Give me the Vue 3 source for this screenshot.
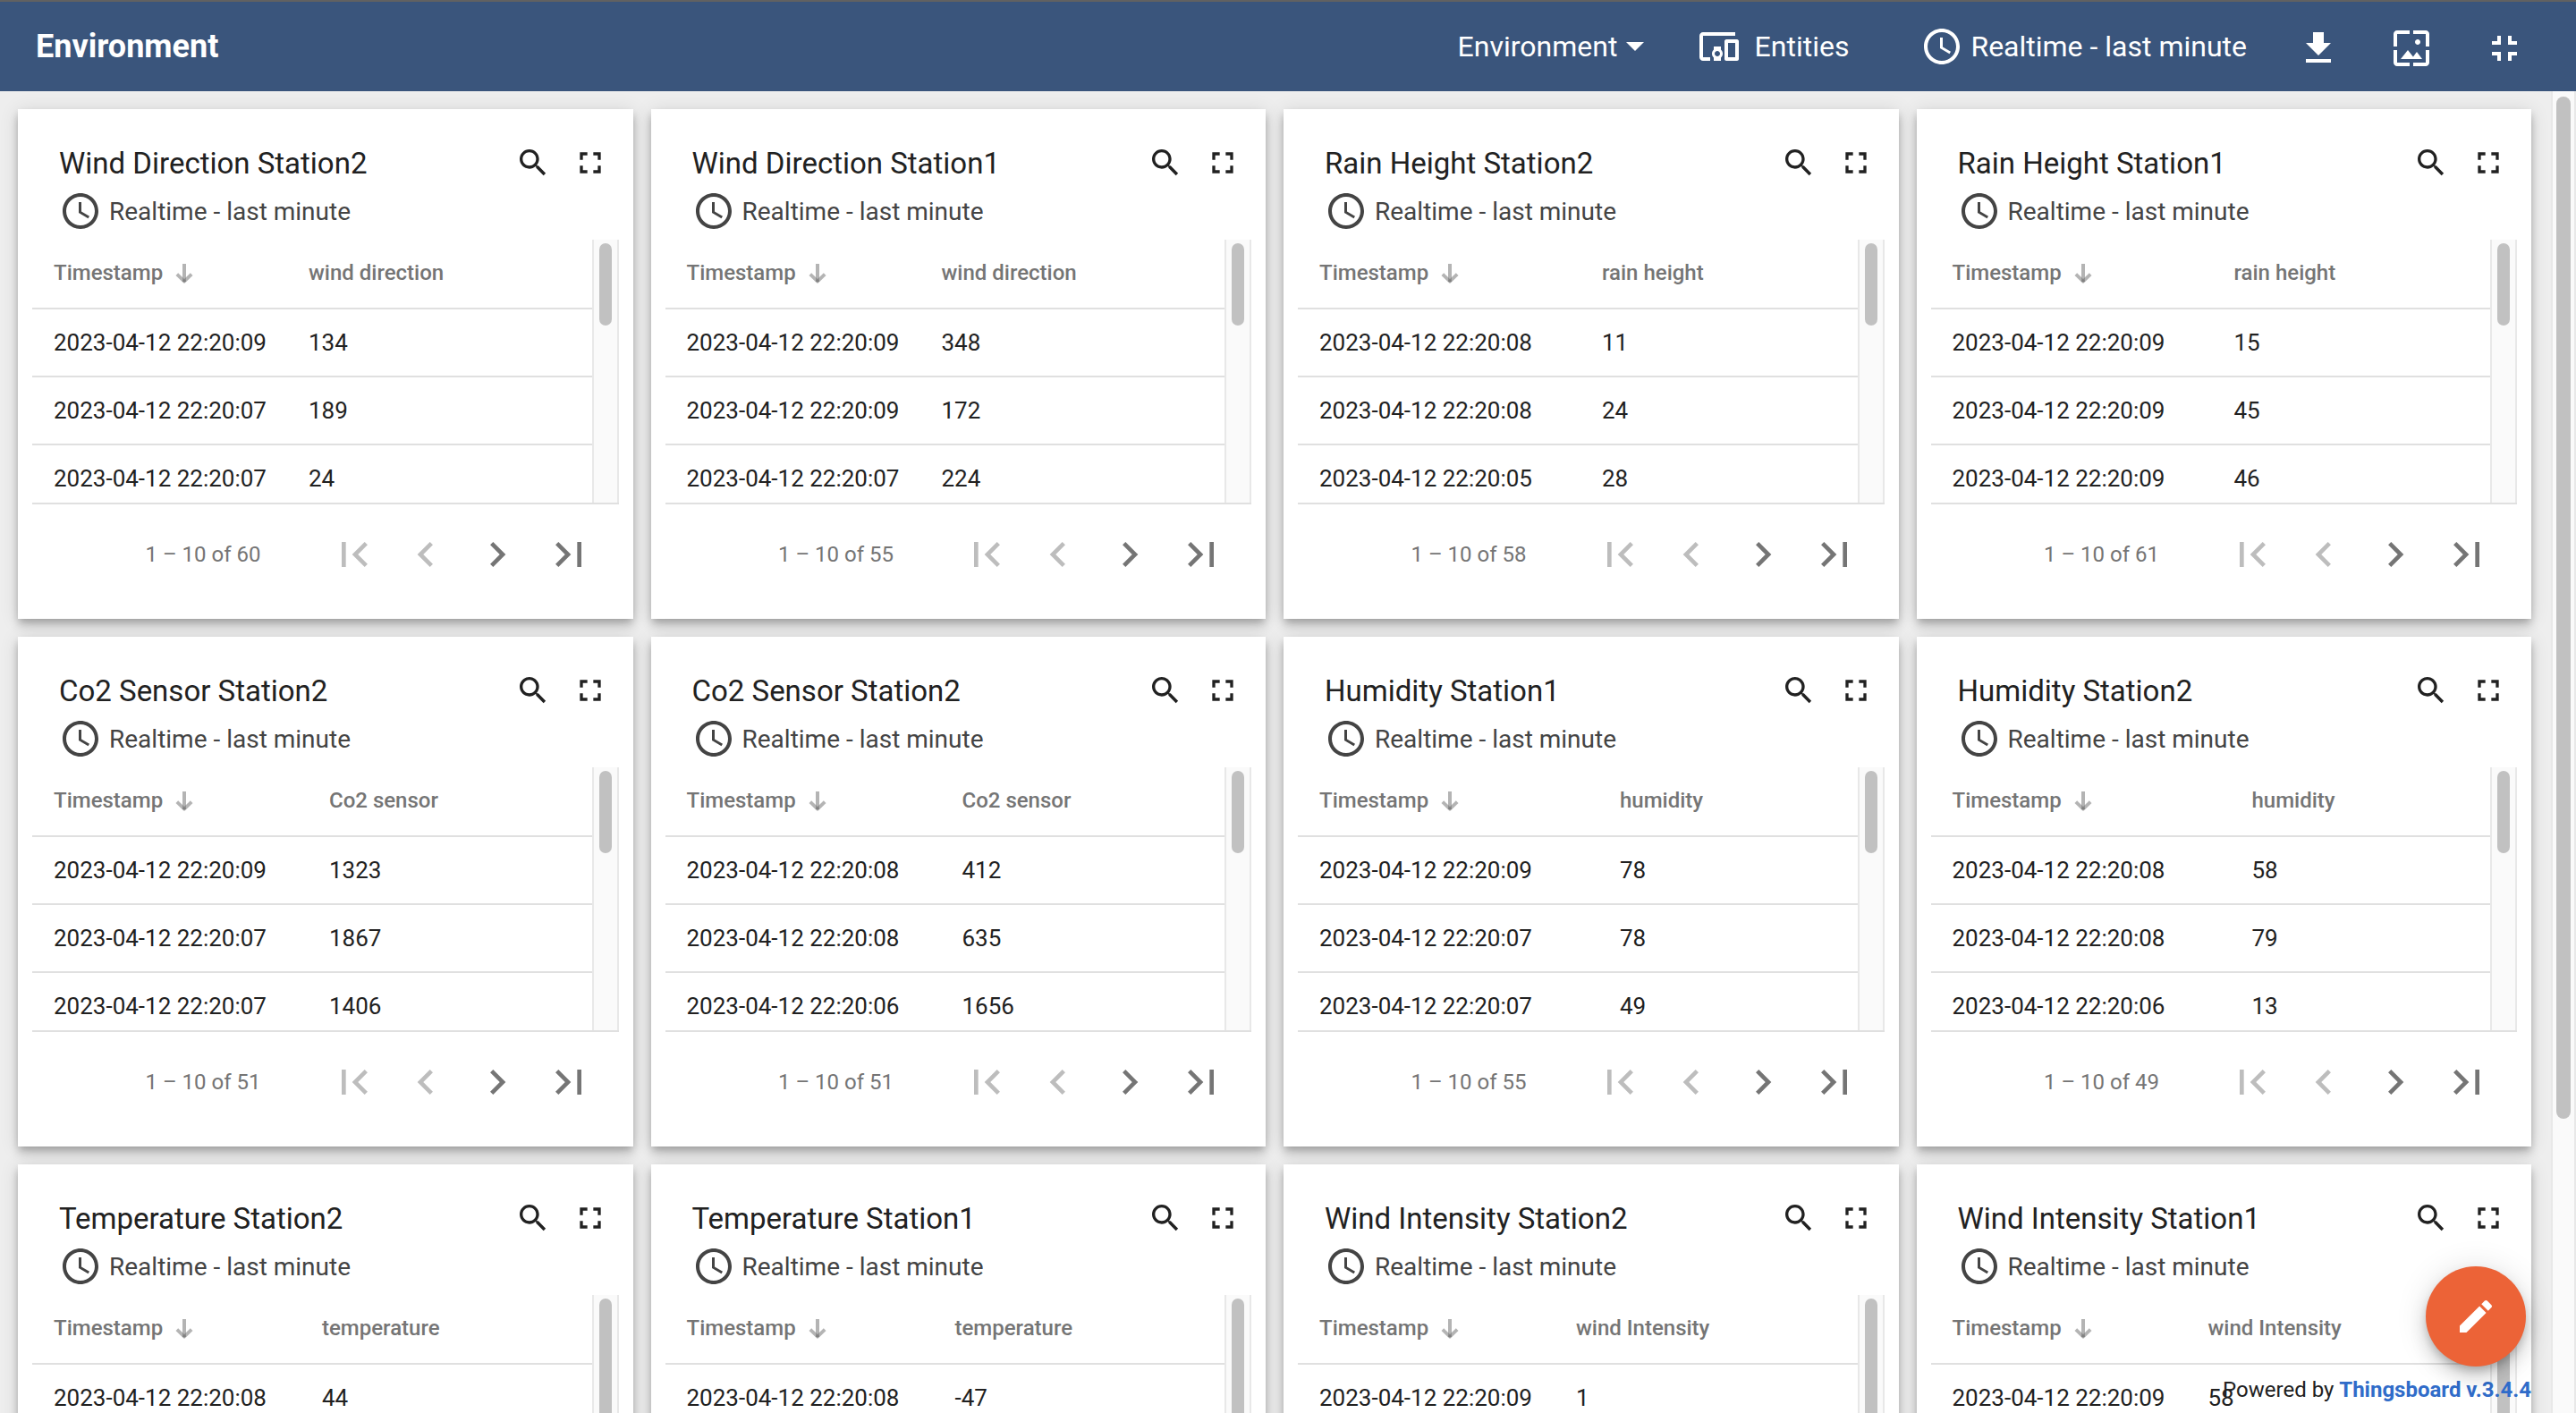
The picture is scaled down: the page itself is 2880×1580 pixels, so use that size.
<script setup>
import { ref } from 'vue'

const dashboard = ref('Environment')

const icons = {
  clock: 'M11.99 2C6.47 2 2 6.48 2 12s4.47 10 9.99 10C17.52 22 22 17.52 22 12S17.52 2 11.99 2zM12 20c-4.42 0-8-3.58-8-8s3.58-8 8-8 8 3.58 8 8-3.58 8-8 8zm.5-13H11v6l5.25 3.15.75-1.23-4.5-2.67z',
  devices: 'M3 6h18V4H3c-1.1 0-2 .9-2 2v12c0 1.1.9 2 2 2h4v-2H3V6zm10 6H9v1.78c-.61.55-1 1.33-1 2.22s.39 1.67 1 2.22V20h4v-1.78c.61-.55 1-1.34 1-2.22s-.39-1.67-1-2.22V12zm-2 5.5c-.83 0-1.5-.67-1.5-1.5s.67-1.5 1.5-1.5 1.5.67 1.5 1.5-.67 1.5-1.5 1.5zM22 8h-6c-.5 0-1 .5-1 1v10c0 .5.5 1 1 1h6c.5 0 1-.5 1-1V9c0-.5-.5-1-1-1zm-1 10h-4v-8h4v8z',
  download: 'M19 9h-4V3H9v6H5l7 7 7-7zM5 18v2h14v-2H5z',
  wallpaper: 'M4 4h7V2H4c-1.1 0-2 .9-2 2v7h2V4zm6 9l-4 5h12l-3-4-2.03 2.71L10 13zm7-4.5c0-.83-.67-1.5-1.5-1.5S14 7.67 14 8.5s.67 1.5 1.5 1.5S17 9.33 17 8.5zM20 2h-7v2h7v7h2V4c0-1.1-.9-2-2-2zm0 18h-7v2h7c1.1 0 2-.9 2-2v-7h-2v7zM4 13H2v7c0 1.1.9 2 2 2h7v-2H4v-7z',
  exitFullscreen: 'M5 16h3v3h2v-5H5v2zm3-8H5v2h5V5H8v3zm6 11h2v-3h3v-2h-5v5zm2-11V5h-2v5h5V8h-3z',
  fullscreen: 'M7 14H5v5h5v-2H7v-3zm-2-4h2V7h3V5H5v5zm12 7h-3v2h5v-5h-2v3zM14 5v2h3v3h2V5h-5z',
  search: 'M15.5 14h-.79l-.28-.27C15.41 12.59 16 11.11 16 9.5 16 5.91 13.09 3 9.5 3S3 5.91 3 9.5 5.91 16 9.5 16c1.61 0 3.09-.59 4.23-1.57l.27.28v.79l5 4.99L20.49 19l-4.99-5zm-6 0C7.01 14 5 11.99 5 9.5S7.01 5 9.5 5 14 7.01 14 9.5 11.99 14 9.5 14z',
  edit: 'M3 17.25V21h3.75L17.81 9.94l-3.75-3.75L3 17.25zM20.71 7.04c.39-.39.39-1.02 0-1.41l-2.34-2.34c-.39-.39-1.02-.39-1.41 0l-1.83 1.83 3.75 3.75 1.83-1.83z',
}

const tools = [
  { label: 'Export dashboard', icon: icons.download },
  { label: 'Update dashboard image', icon: icons.wallpaper },
  { label: 'Exit fullscreen', icon: icons.exitFullscreen },
]

const pagerButtons = [
  { label: 'First page', disabled: true, icon: 'M18.41 16.59L13.82 12l4.59-4.59L17 6l-6 6 6 6zM6 6h2v12H6z' },
  { label: 'Previous page', disabled: true, icon: 'M15.41 7.41L14 6l-6 6 6 6 1.41-1.41L10.83 12z' },
  { label: 'Next page', disabled: false, icon: 'M10 6L8.59 7.41 13.17 12l-4.58 4.59L10 18l6-6z' },
  { label: 'Last page', disabled: false, icon: 'M5.59 7.41L10.18 12l-4.59 4.59L7 18l6-6-6-6zM16 6h2v12h-2z' },
]

const day = '2023-04-12 '

const widgets = [
  { title: 'Wind Direction Station2', column: 'wind direction', timeWidth: 309, thumb: 92, total: 60, rows: [['22:20:09', 134], ['22:20:07', 189], ['22:20:07', 24]] },
  { title: 'Wind Direction Station1', column: 'wind direction', timeWidth: 309, thumb: 92, total: 55, rows: [['22:20:09', 348], ['22:20:09', 172], ['22:20:07', 224]] },
  { title: 'Rain Height Station2', column: 'rain height', timeWidth: 340, thumb: 92, total: 58, rows: [['22:20:08', 11], ['22:20:08', 24], ['22:20:05', 28]] },
  { title: 'Rain Height Station1', column: 'rain height', timeWidth: 339, thumb: 92, total: 61, rows: [['22:20:09', 15], ['22:20:09', 45], ['22:20:09', 46]] },
  { title: 'Co2 Sensor Station2', column: 'Co2 sensor', timeWidth: 332, thumb: 92, total: 51, rows: [['22:20:09', 1323], ['22:20:07', 1867], ['22:20:07', 1406]] },
  { title: 'Co2 Sensor Station2', column: 'Co2 sensor', timeWidth: 332, thumb: 92, total: 51, rows: [['22:20:08', 412], ['22:20:08', 635], ['22:20:06', 1656]] },
  { title: 'Humidity Station1', column: 'humidity', timeWidth: 360, thumb: 92, total: 55, rows: [['22:20:09', 78], ['22:20:07', 78], ['22:20:07', 49]] },
  { title: 'Humidity Station2', column: 'humidity', timeWidth: 359, thumb: 92, total: 49, rows: [['22:20:08', 58], ['22:20:08', 79], ['22:20:06', 13]] },
  { title: 'Temperature Station2', column: 'temperature', timeWidth: 324, thumb: 180, rows: [['22:20:08', 44]] },
  { title: 'Temperature Station1', column: 'temperature', timeWidth: 324, thumb: 180, rows: [['22:20:08', -47]] },
  { title: 'Wind Intensity Station2', column: 'wind Intensity', timeWidth: 311, thumb: 180, rows: [['22:20:09', 1]] },
  { title: 'Wind Intensity Station1', column: 'wind Intensity', timeWidth: 310, thumb: 180, rows: [['22:20:09', 58]] },
]
</script>

<template>
  <div class="page">
    <header class="toolbar">
      <h1 class="toolbar-title">Environment</h1>
      <label class="state">
        <select v-model="dashboard" class="state-select" aria-label="Dashboard">
          <option>Environment</option>
        </select>
        <svg class="caret" viewBox="0 0 20 10" aria-hidden="true"><path d="M0 0h20L10 10z" /></svg>
      </label>
      <button type="button" class="text-button entities">
        <svg class="icon" viewBox="0 0 24 24" aria-hidden="true"><path :d="icons.devices" /></svg>
        Entities
      </button>
      <button type="button" class="text-button window">
        <svg class="icon" viewBox="0 0 24 24" aria-hidden="true"><path :d="icons.clock" /></svg>
        Realtime - last minute
      </button>
      <div class="tools">
        <button v-for="tool in tools" :key="tool.label" type="button" class="tool" :aria-label="tool.label">
          <svg class="icon" viewBox="0 0 24 24" aria-hidden="true"><path :d="tool.icon" /></svg>
        </button>
      </div>
    </header>

    <div class="body">
      <main class="grid">
        <section v-for="(widget, index) in widgets" :key="index" class="card">
          <div class="card-head">
            <h2 class="card-title">{{ widget.title }}</h2>
            <button type="button" class="card-action" aria-label="Search">
              <svg viewBox="0 0 24 24" aria-hidden="true"><path :d="icons.search" /></svg>
            </button>
            <button type="button" class="card-action" aria-label="Fullscreen">
              <svg viewBox="0 0 24 24" aria-hidden="true"><path :d="icons.fullscreen" /></svg>
            </button>
          </div>
          <button type="button" class="card-window">
            <svg class="icon" viewBox="0 0 24 24" aria-hidden="true"><path :d="icons.clock" /></svg>
            Realtime - last minute
          </button>
          <div class="table-area">
            <div class="table-view">
              <table>
                <colgroup>
                  <col :style="{ width: widget.timeWidth + 'px' }" />
                  <col />
                </colgroup>
                <thead>
                  <tr>
                    <th scope="col" class="time">
                      <span class="sort">
                        Timestamp
                        <svg class="sort-arrow" viewBox="0 0 24 24" aria-hidden="true">
                          <path class="sort-line" d="M10 2h4v20h-4z" />
                          <path class="sort-line" d="M2.5 15l2.7-2.7L14 21l-2.5 2.7z" />
                          <path class="sort-line" d="M21.5 15l-2.7-2.7L10 21l2.5 2.7z" />
                        </svg>
                      </span>
                    </th>
                    <th scope="col">{{ widget.column }}</th>
                  </tr>
                </thead>
                <tbody>
                  <tr v-for="(row, i) in widget.rows" :key="i">
                    <td class="time">{{ day + row[0] }}</td>
                    <td>{{ row[1] }}</td>
                  </tr>
                </tbody>
              </table>
            </div>
            <div class="track"><div class="thumb" :style="{ height: widget.thumb + 'px' }"></div></div>
          </div>
          <div class="pager">
            <span v-if="widget.total" class="range">1 – 10 of {{ widget.total }}</span>
            <button
              v-for="button in pagerButtons"
              :key="button.label"
              type="button"
              class="pager-button"
              :disabled="button.disabled"
              :aria-label="button.label"
            >
              <svg viewBox="0 0 24 24" aria-hidden="true"><path :d="button.icon" /></svg>
            </button>
          </div>
        </section>
      </main>
      <div class="track page-track"><div class="thumb page-thumb"></div></div>
    </div>

    <footer class="powered">Powered by <a href="#">Thingsboard v.3.4.4</a></footer>
    <button type="button" class="fab" aria-label="Edit dashboard">
      <svg class="icon" viewBox="0 0 24 24" aria-hidden="true"><path :d="icons.edit" /></svg>
    </button>
  </div>
</template>

<style>
body {
  margin: 0;
}
</style>

<style scoped>
.page {
  position: relative;
  display: flex;
  flex-direction: column;
  height: 100vh;
  overflow: hidden;
  background: #eee;
  color: #212121;
  font-family: Roboto, "Liberation Sans", sans-serif;
}

button,
select {
  margin: 0;
  padding: 0;
  border: 0;
  background: none;
  color: inherit;
  font: inherit;
}

svg {
  display: block;
  flex: none;
  fill: currentColor;
}

.icon {
  width: 48px;
  height: 48px;
}

.toolbar {
  display: flex;
  flex: none;
  align-items: center;
  height: 100px;
  padding: 0 28px 0 40px;
  border-top: 2px solid #616161;
  background: #3a557c;
  color: #fff;
  font-size: 32px;
}

.toolbar-title {
  flex: 1;
  margin: 0;
  font-size: 36px;
  font-weight: 700;
}

.state {
  display: flex;
  align-items: center;
  margin-right: 60px;
}

.state-select {
  width: 188px;
  appearance: none;
}

.caret {
  width: 20px;
  height: 10px;
}

.text-button {
  display: flex;
  align-items: center;
}

.entities {
  gap: 16px;
  margin-right: 80px;
}

.window {
  gap: 8px;
  margin-right: 28px;
}

.tools {
  display: flex;
  padding-top: 4px;
}

.tool {
  display: flex;
  justify-content: center;
  width: 104px;
}

.body {
  display: flex;
  flex: 1;
  min-height: 0;
}

.grid {
  display: grid;
  flex: 1;
  grid-template-columns: repeat(4, minmax(0, 1fr));
  align-content: start;
  gap: 20px;
  padding: 20px 22px 20px 20px;
  overflow: hidden;
}

.card {
  padding: 36px 16px 16px;
  background: #fff;
  box-shadow:
    0 4px 8px -2px rgba(0, 0, 0, 0.2),
    0 8px 10px 0 rgba(0, 0, 0, 0.14),
    0 2px 20px 0 rgba(0, 0, 0, 0.12);
}

.card-head {
  display: flex;
  align-items: center;
  gap: 24px;
  height: 48px;
  padding: 0 12px 0 30px;
}

.card-title {
  flex: 1;
  margin: 0;
  font-size: 33px;
  font-weight: 400;
  white-space: nowrap;
}

.card-action svg {
  width: 40px;
  height: 40px;
}

.card-window {
  display: flex;
  align-items: center;
  gap: 8px;
  margin: 6px 0 8px 30px;
  color: #444;
  font-size: 28px;
}

.table-area {
  display: flex;
  height: 294px;
  border-bottom: 2px solid #e0e0e0;
}

.table-view {
  flex: 1;
  overflow: hidden;
}

table {
  width: 100%;
  border-spacing: 0;
  table-layout: fixed;
}

th,
td {
  height: 74px;
  padding: 0;
  border-bottom: 2px solid #e0e0e0;
  text-align: left;
  white-space: nowrap;
}

th {
  padding-bottom: 2px;
  color: #757575;
  font-size: 24px;
  font-weight: 500;
}

td {
  font-size: 26px;
}

.time {
  padding-left: 24px;
}

.sort {
  display: flex;
  align-items: center;
  gap: 12px;
}

.sort-arrow {
  width: 24px;
  height: 24px;
}

.sort-line {
  fill: #757575;
  fill-opacity: 0.54;
}

.track {
  box-sizing: border-box;
  width: 30px;
  padding: 4px 6px;
  border: solid #e8e8e8;
  border-width: 0 2px;
  background: #fafafa;
}

.thumb {
  border-radius: 8px;
  background: #c1c1c1;
}

.page-track {
  width: 28px;
  padding: 6px 4px;
}

.page-thumb {
  height: 78%;
}

.pager {
  display: flex;
  align-items: center;
  justify-content: flex-end;
  height: 112px;
  padding-right: 16px;
  color: #757575;
}

.range {
  margin-right: 64px;
  font-size: 24px;
}

.pager-button {
  display: flex;
  align-items: center;
  justify-content: center;
  width: 80px;
  height: 80px;
}

.pager-button:disabled {
  color: #bdbdbd;
}

.pager-button svg {
  width: 56px;
  height: 56px;
}

.powered {
  position: absolute;
  right: 50px;
  bottom: 12px;
  font-size: 24px;
  line-height: 28px;
}

.powered a {
  color: #306cc9;
  font-weight: 700;
  text-decoration: none;
}

.fab {
  position: absolute;
  right: 56px;
  bottom: 52px;
  display: flex;
  align-items: center;
  justify-content: center;
  width: 112px;
  height: 112px;
  border-radius: 50%;
  background: #ec6337;
  box-shadow:
    0 6px 10px -2px rgba(0, 0, 0, 0.2),
    0 12px 20px 0 rgba(0, 0, 0, 0.14),
    0 2px 36px 0 rgba(0, 0, 0, 0.12);
  color: #fff;
}
</style>
